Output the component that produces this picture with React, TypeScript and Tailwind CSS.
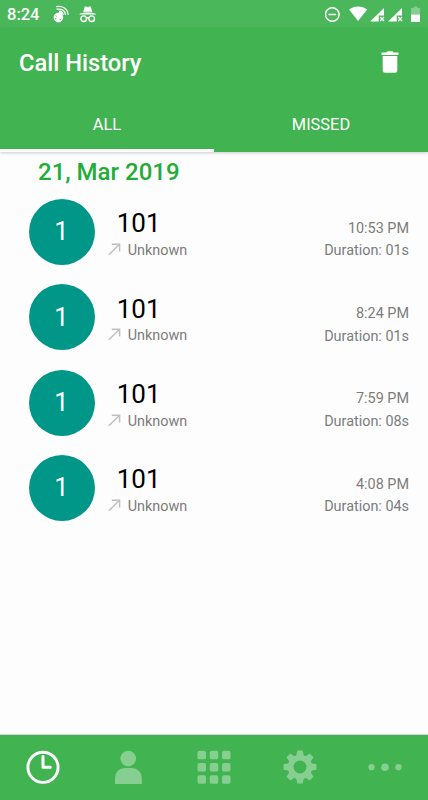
import { useState } from 'react';

const calls = [
  { id: 1, name: '101', label: 'Unknown', time: '10:53 PM', duration: '01s' },
  { id: 2, name: '101', label: 'Unknown', time: '8:24 PM', duration: '01s' },
  { id: 3, name: '101', label: 'Unknown', time: '7:59 PM', duration: '08s' },
  { id: 4, name: '101', label: 'Unknown', time: '4:08 PM', duration: '04s' },
];

const GEAR_ANGLES = [0, 45, 90, 135, 180, 225, 270, 315];
const GRID_STEPS = [0, 12.25, 24.5];

function CastingIcon() {
  return (
    <svg width="16" height="18" viewBox="0 0 16 18" fill="none" stroke="white">
      <circle cx="5.4" cy="12.6" r="4.8" fill="white" stroke="none" />
      <path d="M5 9.5 6.8 5l3 2L9 11z" fill="white" stroke="none" />
      <path d="M3 1.6C9 .5 14.6 3 15.2 10M3.5 4.2c5-.8 8.6 1.3 9 5.8M6 6.5c2.5 0 4 1 4.2 3.5" strokeWidth="1.2" />
      <path d="m2.6 10.5 1.2 1M2 13.5l1.5.5M6.5 14l1.5 1" stroke="#4ab85a" strokeWidth=".9" />
    </svg>
  );
}

function IncognitoIcon() {
  return (
    <svg width="18" height="17" viewBox="0 0 18 17" fill="none">
      <path d="M4.2 5.8 5.8.6h1.4l1.5.7 1.5-.7h1.5l1.6 5.2z" fill="white" />
      <path d="M.5 7.9C2.2 6.7 5 6.4 8.7 6.4s6.5.3 8.2 1.5v.5H.5z" fill="white" />
      <circle cx="4.7" cy="12.7" r="2.8" stroke="white" strokeWidth="1.4" />
      <circle cx="12.7" cy="12.7" r="2.8" stroke="white" strokeWidth="1.4" />
      <path d="M7.3 12.2q1.4-.8 2.8 0" stroke="white" strokeWidth="1.4" />
    </svg>
  );
}

function StatusIcons() {
  return (
    <svg width="103" height="28" viewBox="0 0 103 28" fill="none">
      {/* do not disturb */}
      <circle cx="7.3" cy="14.5" r="6.8" stroke="white" strokeWidth="1.5" />
      <path d="M3.5 14.5h7.6" stroke="white" strokeWidth="1.5" />
      {/* wifi */}
      <path d="M24 9.5c5.4-4.1 12.8-4.1 18.2 0L33.1 21z" fill="white" />
      {/* two sims without signal */}
      <path d="M59 8v7.5h-5.3v6H45.2z" fill="white" />
      <path d="m55.2 17 3.8 4M59 17l-3.8 4" stroke="white" strokeWidth="1.4" />
      <path d="M77 8v7.5h-5.3v6H63.2z" fill="white" />
      <path d="m73.2 17 3.8 4M77 17l-3.8 4" stroke="white" strokeWidth="1.4" />
      {/* battery */}
      <path d="M86 14.5V8h2.7V6.5h3.7V8H95v6.5z" fill="white" fillOpacity=".32" />
      <path d="M86 14.5h9V22h-9z" fill="white" />
    </svg>
  );
}

function TrashIcon() {
  return (
    <svg width="18" height="24" viewBox="0 0 18 24" fill="white">
      <path d="M.5 2.5h4.8L6.5 1.2h5l1.2 1.3h4.8V5H.5z" />
      <path d="M1.7 6h14.6v14.5q0 2.3-2.3 2.3H4q-2.3 0-2.3-2.3z" />
    </svg>
  );
}

function OutgoingIcon() {
  return (
    <svg width="13" height="13" viewBox="0 0 13 13" className="-mt-[3px]" fill="none" stroke="#c0c0c0" strokeWidth="1.5">
      <path d="M.8 11.8 11.3 1.5M3.8 1.2h7.8v7.3" />
    </svg>
  );
}

function ClockIcon() {
  return (
    <svg width="34" height="34" viewBox="0 0 34 34" fill="none" stroke="white">
      <circle cx="17" cy="17.3" r="15.1" strokeWidth="2.9" />
      <path d="M17 6.5v10.7h7.3" strokeWidth="3" strokeLinecap="round" strokeLinejoin="round" />
    </svg>
  );
}

function PersonIcon() {
  return (
    <svg width="34" height="34" viewBox="0 0 34 34" fill="#86cf90">
      <circle cx="17.2" cy="8.6" r="7.8" />
      <path d="M4 33.9v-6a10 10 0 0 1 10-10h6.8a10 10 0 0 1 10 10v6z" />
    </svg>
  );
}

function KeypadIcon() {
  return (
    <svg width="34" height="34" viewBox="0 0 34 34" fill="#86cf90">
      {GRID_STEPS.map(y =>
        GRID_STEPS.map(x => (
          <rect key={`${x}-${y}`} x={x + 0.5} y={y + 0.8} width="8.5" height="8.5" rx="1.9" />
        ))
      )}
    </svg>
  );
}

function GearIcon() {
  return (
    <svg width="34" height="34" viewBox="0 0 34 34" fill="#86cf90">
      {GEAR_ANGLES.map(a => (
        <path key={a} d="M12.9 7.5 14.3.6h5.4l1.4 6.9z" transform={`rotate(${a} 17 17)`} />
      ))}
      <circle cx="17" cy="17" r="9.4" fill="none" stroke="#86cf90" strokeWidth="5.8" />
    </svg>
  );
}

function MoreIcon() {
  return (
    <svg width="34" height="34" viewBox="0 0 34 34" fill="#86cf90">
      <circle cx="3.5" cy="17.2" r="3.1" />
      <circle cx="17" cy="17.2" r="3.8" />
      <circle cx="30.5" cy="17.2" r="3.1" />
    </svg>
  );
}

const navItems = [
  { id: 'history', label: 'History', Icon: ClockIcon },
  { id: 'contacts', label: 'Contacts', Icon: PersonIcon },
  { id: 'keypad', label: 'Keypad', Icon: KeypadIcon },
  { id: 'settings', label: 'Settings', Icon: GearIcon },
  { id: 'more', label: 'More', Icon: MoreIcon },
];

export default function App() {
  const [tab, setTab] = useState('ALL');

  return (
    <div className="flex h-[800px] w-[428px] flex-col overflow-hidden bg-[#fdfdfd] font-['Roboto',sans-serif]">
      {/* Status bar */}
      <div className="flex h-7 shrink-0 items-center bg-[#4ab85a] pl-[7px] text-white">
        <span className="w-[46px] pt-[2px] text-[16.5px] leading-6 font-medium">8:24</span>
        <CastingIcon />
        <span className="ml-[10px]"><IncognitoIcon /></span>
        <span className="ml-auto"><StatusIcons /></span>
      </div>

      {/* Title and tabs */}
      <header className="z-10 shrink-0 bg-[#41b350] text-white shadow-[0_1px_3px_rgba(0,0,0,0.2)]">
        <div className="flex h-[70px] items-center justify-between pr-[29px] pl-[19px]">
          <h1 className="text-[23.7px] leading-8 font-medium">Call History</h1>
          <button aria-label="Clear history" className="-mt-[2px]"><TrashIcon /></button>
        </div>
        <div className="flex h-[54px]">
          {['ALL', 'MISSED'].map(name => (
            <button
              key={name}
              onClick={() => setTab(name)}
              className={`flex-1 border-b-[3px] pt-[4px] text-[16.4px] ${tab === name ? 'border-white' : 'border-transparent'}`}
            >
              {name}
            </button>
          ))}
        </div>
      </header>

      {/* Calls */}
      <main className="flex-1">
        <h2 className="h-[38px] pt-[4px] pl-[38px] text-2xl leading-8 font-medium text-[#23ad38]">21, Mar 2019</h2>
        {calls.map(call => (
          <div key={call.id} className="flex h-[85.33px] items-start pt-[9px] pr-[19px] pl-[28.5px]">
            <div className="flex h-[66px] w-[66px] items-center justify-center rounded-full bg-[#009688] pb-px text-[25.5px] text-white">
              1
            </div>
            <div className="ml-[13.2px] pt-[8.4px]">
              <div className="pl-[9px] text-[26px] leading-8 text-black">{call.name}</div>
              <div className="mt-[0.6px] flex items-center gap-[7px] text-[14.4px] leading-[22px] text-[#7c7c7c]">
                <OutgoingIcon />
                {call.label}
              </div>
            </div>
            <div className="ml-auto pt-[18.6px] text-right text-[14.4px] leading-[22.8px] text-[#7c7c7c]">
              <div>{call.time}</div>
              <div>Duration: {call.duration}</div>
            </div>
          </div>
        ))}
      </main>

      {/* Bottom navigation */}
      <nav className="flex h-[65px] shrink-0 bg-[#41b350] pb-px shadow-[0_-1px_1px_rgba(0,0,0,0.15)]">
        {navItems.map(({ id, label, Icon }) => (
          <button key={id} aria-label={label} className="flex flex-1 items-center justify-center">
            <Icon />
          </button>
        ))}
      </nav>
    </div>
  );
}
